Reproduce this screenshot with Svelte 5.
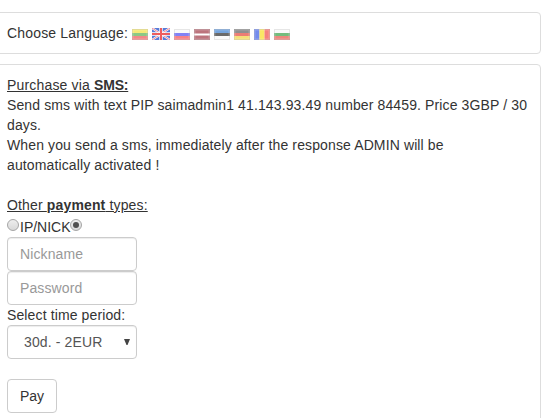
<script>
  const flags = ['lt', 'gb', 'ru', 'lv', 'ee', 'de', 'ro', 'bg'];
  const stripes = {
    lt: ['#f0dc20', '#3fa535', '#e83a3a'],
    ru: ['#f8f8f8', '#3030f0', '#f03038'],
    ee: ['#1868c8', '#080808', '#f8f8f8'],
    de: ['#454545', '#e02818', '#f0cc20'],
    bg: ['#f8f8f8', '#189028', '#e03828']
  };
</script>

<main>
  <section class="panel languages">
    <span class="label">Choose Language:</span>
    <div class="flags">
      {#each flags as code}
        {#if code === 'gb'}
          <svg class="flag gb" viewBox="0 0 18 12" width="18" height="12" role="img" aria-label={code}>
            <rect width="18" height="12" fill="#1848c8" />
            <path d="M0 0 18 12M18 0 0 12" stroke="#fff" stroke-width="2" />
            <path d="M0 0 18 12M18 0 0 12" stroke="#e83040" stroke-width=".8" />
            <path d="M9 0V12M0 6H18" stroke="#fff" stroke-width="3.4" />
            <path d="M9 0V12M0 6H18" stroke="#e82020" stroke-width="2" />
          </svg>
        {:else}
          <svg class="flag" viewBox="0 0 16 11" width="16" height="11" role="img" aria-label={code}>
            {#if stripes[code]}
              <rect width="16" height="4" fill={stripes[code][0]} />
              <rect y="4" width="16" height="3" fill={stripes[code][1]} />
              <rect y="7" width="16" height="4" fill={stripes[code][2]} />
            {:else if code === 'lv'}
              <rect width="16" height="11" fill="#901828" />
              <rect y="4.5" width="16" height="2" fill="#fff" />
            {:else}
              <rect width="5.5" height="11" fill="#1840e0" />
              <rect x="5.5" width="5" height="11" fill="#f8d800" />
              <rect x="10.5" width="5.5" height="11" fill="#f03028" />
            {/if}
            <rect x="1" y="1" width="14" height="9" fill="none" stroke="#fff" stroke-width="1" stroke-opacity=".2" />
            <rect x=".5" y=".5" width="15" height="10" fill="none" stroke="#888" stroke-opacity=".3" />
          </svg>
        {/if}
      {/each}
    </div>
  </section>

  <section class="panel purchase">
    <div class="heading"><u>Purchase via <b>SMS:</b></u></div>
    <div>Send sms with text PIP saimadmin1 41.143.93.49 number 84459. Price 3GBP / 30<br />days.</div>
    <div>When you send a sms, immediately after the response ADMIN will be<br />automatically activated !</div>
    <div class="other"><u>Other <b>payment</b> types:</u></div>
    <div class="radios">
      <span class="radio"></span><span class="nick">IP/NICK</span><span class="radio on"></span>
    </div>
    <input class="field" type="text" placeholder="Nickname" />
    <input class="field" type="password" placeholder="Password" />
    <div>Select time period:</div>
    <div class="field select">
      <span>30d. - 2EUR</span>
      <svg width="6" height="6" viewBox="0 0 6 6"><path d="M0 0H6L3.5 6H2.5Z" fill="#444" /></svg>
    </div>
    <button type="button">Pay</button>
  </section>
</main>

<style>
  main {
    box-sizing: border-box;
    height: 418px;
    padding-top: 12px;
    overflow: hidden;
    background: #fff;
    color: #333;
    font: 14px/20px "Liberation Sans", Arial, sans-serif;
    letter-spacing: .122px;
  }
  .panel {
    box-sizing: border-box;
    margin: 0 5px 10px -9px;
    padding: 10px 10px 10px 15px;
    border: 1px solid #ddd;
    border-radius: 4px;
    background: #fff;
    white-space: nowrap;
  }
  .languages { display: flex; align-items: center; height: 42px; }
  .label { width: 125px; letter-spacing: .17px; }
  .flags { display: flex; align-items: flex-end; gap: 4px; padding-top: 2px; }
  .flag { display: block; opacity: .6; }
  .gb { opacity: .72; }
  .purchase { height: 370px; }
  .heading { letter-spacing: .17px; }
  .heading b { letter-spacing: -.2px; }
  .other { margin-top: 20px; letter-spacing: .15px; }
  .radios { display: flex; align-items: center; height: 22px; }
  .nick { padding-top: 2px; letter-spacing: 0; margin-right: -1px; }
  .radio {
    display: flex;
    align-items: center;
    justify-content: center;
    box-sizing: border-box;
    width: 12px;
    height: 12px;
    margin: 0 1px 2px 0;
    border: 1px solid #a5a5a5;
    border-radius: 50%;
    background: linear-gradient(#eee, #d8d8d8);
  }
  .radio.on::after {
    content: "";
    width: 6px;
    height: 6px;
    border-radius: 50%;
    background: #505050;
  }
  .field {
    display: block;
    box-sizing: border-box;
    width: 130px;
    height: 34px;
    margin: 0;
    padding: 6px 12px;
    border: 1px solid #ccc;
    border-radius: 4px;
    background: #fff;
    box-shadow: inset 0 1px 1px rgba(0, 0, 0, .075);
    color: #555;
    font: inherit;
    letter-spacing: .122px;
  }
  .field::placeholder { color: #999; opacity: 1; }
  .select {
    display: flex;
    align-items: center;
    justify-content: space-between;
    padding: 6px 6px 6px 16px;
  }
  button {
    display: block;
    box-sizing: border-box;
    width: 50px;
    height: 34px;
    margin-top: 20px;
    padding: 6px 12px;
    border: 1px solid #ccc;
    border-radius: 4px;
    background: #fff;
    color: #333;
    font: inherit;
  }
</style>
